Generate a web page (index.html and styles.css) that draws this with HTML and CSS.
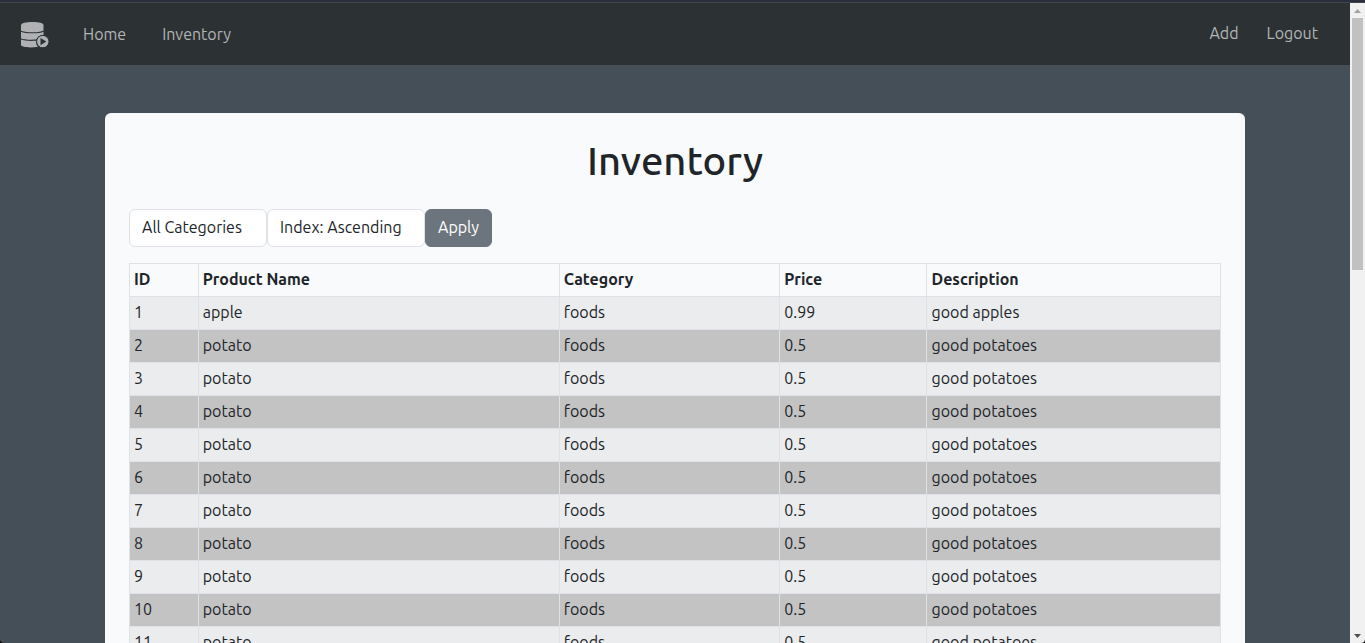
FILE: index.html
```html
<!DOCTYPE html>
<html lang="en">
<head>
<meta charset="utf-8">
<title>Inventory</title>
<link rel="stylesheet" href="styles.css">
</head>
<body>
<div class="window">
  <div class="window-edge"></div>
  <div class="viewport">
    <div class="page">
      <nav class="navbar">
        <a class="brand" href="#" aria-label="Inventory database">
          <svg class="brand-icon" viewBox="0 0 30 28" aria-hidden="true">
            <path class="disk" d="M1 4.200C1 2 5.800 1 12.500 1S23.500 2 23.500 4.200V9.400C22 10.600 18 11.200 12.500 11.200S2.500 10.600 1 9.400Z"/>
            <path class="disk" d="M1 10.800C3.500 11.900 7.500 12.300 12.500 12.300S21.500 11.900 23.500 10.800V14.200C20 14 17 16 16.300 18.600C8.500 19 3 18.400 1 17.200Z"/>
            <path class="disk" d="M1 18.600C4 19.800 9.500 20.200 16 19.800C16 22.300 16.600 24.300 18 25.800C11 27 1 26.500 1 23.800Z"/>
            <circle class="disk" cx="22.800" cy="20.600" r="6.200"/>
            <path class="play" d="M20.500 17V24.200L26.300 20.600Z"/>
          </svg>
        </a>
        <div class="nav-main">
          <a class="nav-link" href="#">Home</a>
          <a class="nav-link" href="#">Inventory</a>
        </div>
        <div class="nav-user">
          <a class="nav-link" href="#">Add</a>
          <a class="nav-link" href="#">Logout</a>
        </div>
      </nav>
      <main class="card">
        <h1 class="title">Inventory</h1>
        <form class="filters">
          <select class="filter filter-category" aria-label="Category"><option>All Categories</option></select>
          <select class="filter filter-order" aria-label="Sort order"><option>Index: Ascending</option></select>
          <button class="apply" type="button">Apply</button>
        </form>
        <table class="items">
          <colgroup><col class="col-id"><col class="col-name"><col class="col-category"><col class="col-price"><col class="col-description"></colgroup>
          <thead>
            <tr><th>ID</th><th>Product Name</th><th>Category</th><th>Price</th><th>Description</th></tr>
          </thead>
          <tbody>
            <tr><td>1</td><td>apple</td><td>foods</td><td>0.99</td><td>good apples</td></tr>
            <tr><td>2</td><td>potato</td><td>foods</td><td>0.5</td><td>good potatoes</td></tr>
            <tr><td>3</td><td>potato</td><td>foods</td><td>0.5</td><td>good potatoes</td></tr>
            <tr><td>4</td><td>potato</td><td>foods</td><td>0.5</td><td>good potatoes</td></tr>
            <tr><td>5</td><td>potato</td><td>foods</td><td>0.5</td><td>good potatoes</td></tr>
            <tr><td>6</td><td>potato</td><td>foods</td><td>0.5</td><td>good potatoes</td></tr>
            <tr><td>7</td><td>potato</td><td>foods</td><td>0.5</td><td>good potatoes</td></tr>
            <tr><td>8</td><td>potato</td><td>foods</td><td>0.5</td><td>good potatoes</td></tr>
            <tr><td>9</td><td>potato</td><td>foods</td><td>0.5</td><td>good potatoes</td></tr>
            <tr><td>10</td><td>potato</td><td>foods</td><td>0.5</td><td>good potatoes</td></tr>
            <tr><td>11</td><td>potato</td><td>foods</td><td>0.5</td><td>good potatoes</td></tr>
          </tbody>
        </table>
      </main>
    </div>
    <div class="scrollbar" aria-hidden="true">
      <svg class="arrow arrow-up" viewBox="0 0 15 15"><path d="M4 10L7.500 6L11 10Z"/></svg>
      <div class="track"><div class="thumb"></div></div>
      <svg class="arrow arrow-down" viewBox="0 0 15 15"><path d="M4 6L7.500 10L11 6Z"/></svg>
    </div>
  </div>
</div>
</body>
</html>
```
FILE: styles.css
```css
* {
  box-sizing: border-box;
}

body {
  margin: 0;
  background: #000;
  color: #212529;
  font-family: Ubuntu, "Noto Sans", sans-serif;
  font-size: 16px;
  line-height: 24px;
}

.window {
  display: flex;
  flex-direction: column;
  height: 100vh;
  overflow: hidden;
  border-radius: 0 0 4px 4px;
}

.window-edge {
  flex: none;
  height: 3px;
  background: #2b2f3b;
  border-bottom: 1px solid #414550;
}

.viewport {
  display: flex;
  flex: 1;
  min-height: 0;
}

.page {
  flex: 1;
  overflow: hidden;
  background: #454f57;
}

.navbar {
  display: flex;
  align-items: center;
  height: 62px;
  padding: 0 32px 0 20px;
  background: #2c3134;
}

.brand {
  display: flex;
  margin-right: 33px;
  padding-top: 2px;
}

.brand-icon {
  width: 30px;
  height: 28px;
}

.disk {
  fill: #b0b1b2;
}

circle.disk {
  stroke: #2c3134;
  stroke-width: 1;
}

.play {
  fill: #2c3134;
}

.nav-main {
  display: flex;
  gap: 36px;
}

.nav-user {
  display: flex;
  gap: 28px;
  margin-left: auto;
  padding-bottom: 2px;
}

.nav-link {
  color: #b3b4b5;
  text-decoration: none;
}

.card {
  max-width: 1140px;
  margin: 48px auto;
  padding: 24px;
  border-radius: 6px;
  background: #f8fafc;
}

.title {
  margin: 0 0 24px;
  font-size: 40px;
  font-weight: 500;
  line-height: 48px;
  text-align: center;
}

.filters {
  display: flex;
  margin: 0 0 16px;
}

.filter,
.apply {
  height: 38px;
  padding: 0 12px 2px;
  border: 1px solid #dee2e6;
  border-radius: 6px;
  font: inherit;
}

.filter {
  appearance: none;
  background: #fff;
  color: #212529;
}

.filter-category {
  width: 138px;
}

.filter-order {
  width: 158px;
}

.apply {
  border-color: #6c757d;
  background: #6c757d;
  color: #fff;
}

.items {
  width: 100%;
  table-layout: fixed;
  border-collapse: collapse;
}

.col-id {
  width: 6.3%;
}

.col-name {
  width: 33.1%;
}

.col-category {
  width: 20.2%;
}

.col-price {
  width: 13.5%;
}

.items th,
.items td {
  padding: 3px 4px 5px;
  border: 1px solid #dee2e6;
  text-align: left;
}

.items th {
  font-weight: 600;
}

.items tbody tr:nth-child(odd) {
  background: #ebeced;
}

.items tbody tr:nth-child(even) {
  background: #c3c3c3;
}

.scrollbar {
  display: flex;
  flex-direction: column;
  width: 15px;
  background: #f1f1f1;
}

.arrow {
  width: 15px;
  height: 15px;
}

.arrow-up {
  fill: #a3a3a3;
}

.arrow-down {
  fill: #505050;
}

.track {
  flex: 1;
  padding: 0 2px;
}

.thumb {
  height: 41.300%;
  background: #c1c1c1;
}
```
